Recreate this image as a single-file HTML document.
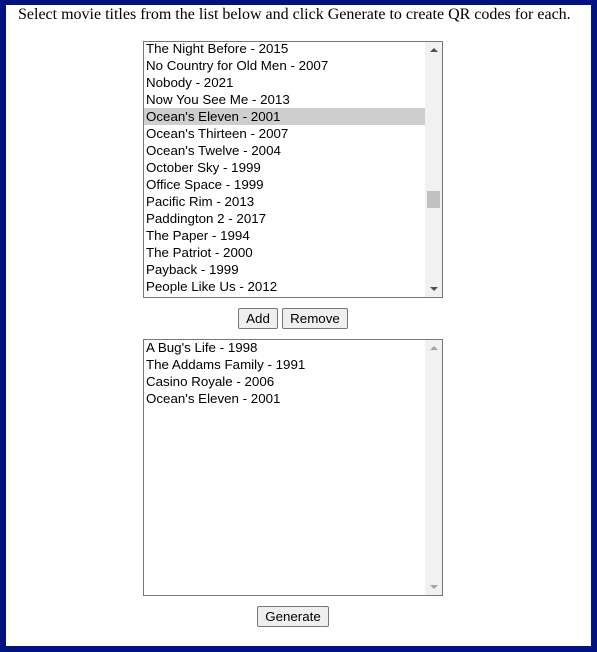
<!DOCTYPE html>
<html><head><style>
html,body{margin:0;padding:0}
body{width:597px;height:652px;position:relative;background:#fff;overflow:hidden}
.frame{position:absolute;left:0;top:0;width:585px;height:641px;border:6px solid #00137f;border-top-width:5px;background:#fff}
.t{position:absolute;left:18px;top:6px;font:16px "Liberation Serif",serif;color:#000;white-space:nowrap}
.box{position:absolute;left:143px;width:298px;height:255px;border:1px solid #767676;background:#fff;overflow:hidden;font:13.33px "Liberation Sans",sans-serif}
.row{height:17px;line-height:17px;padding-left:2px;width:279px;white-space:nowrap;color:#000}
.sel{background:#cecece}
.sb{position:absolute;right:0;top:0;width:17px;height:255px;background:#f1f1f1}
.thumb{position:absolute;left:2px;width:13px;background:#c1c1c1}
.up,.dn{position:absolute;left:5px;width:0;height:0;border-left:4px solid transparent;border-right:4px solid transparent}
.up{top:6px;border-bottom:4px solid #505050}
.dn{bottom:6px;border-top:4px solid #505050}
.dim .up{border-bottom-color:#a3a3a3}.dim .dn{border-top-color:#a3a3a3}
.btn{position:absolute;height:19px;border:1px solid #767676;border-radius:2px;background:#efefef;font:13.33px "Liberation Sans",sans-serif;line-height:19px;text-align:center;color:#000}
</style></head><body>
<div class="frame"></div>
<div class="t">Select movie titles from the list below and click Generate to create QR codes for each.</div>
<div class="box" style="top:41px">
<div style="margin-top:-2px">
<div class="row">The Night Before - 2015</div>
<div class="row">No Country for Old Men - 2007</div>
<div class="row">Nobody - 2021</div>
<div class="row">Now You See Me - 2013</div>
<div class="row sel">Ocean's Eleven - 2001</div>
<div class="row">Ocean's Thirteen - 2007</div>
<div class="row">Ocean's Twelve - 2004</div>
<div class="row">October Sky - 1999</div>
<div class="row">Office Space - 1999</div>
<div class="row">Pacific Rim - 2013</div>
<div class="row">Paddington 2 - 2017</div>
<div class="row">The Paper - 1994</div>
<div class="row">The Patriot - 2000</div>
<div class="row">Payback - 1999</div>
<div class="row">People Like Us - 2012</div>
<div class="row">Percy Jackson - 2010</div>
</div>
<div class="sb"><div class="up"></div><div class="thumb" style="top:149px;height:17px"></div><div class="dn"></div></div>
</div>
<div class="btn" style="left:238px;top:308px;width:38px">Add</div>
<div class="btn" style="left:282px;top:308px;width:64px">Remove</div>
<div class="box" style="top:339px">
<div style="margin-top:-1px">
<div class="row">A Bug's Life - 1998</div>
<div class="row">The Addams Family - 1991</div>
<div class="row">Casino Royale - 2006</div>
<div class="row">Ocean's Eleven - 2001</div>
</div>
<div class="sb dim"><div class="up"></div><div class="dn"></div></div>
</div>
<div class="btn" style="left:257px;top:606px;width:70px">Generate</div>
</body></html>
